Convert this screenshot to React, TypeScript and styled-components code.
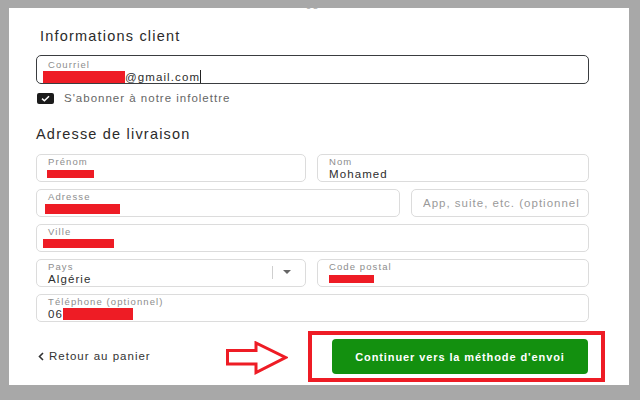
import React from "react";
import styled, { createGlobalStyle } from "styled-components";

const Global = createGlobalStyle`
  html, body { margin: 0; padding: 0; background: #a8a8a8; }
  body { font-family: "Liberation Sans", Arial, sans-serif; color: #333; }
  * { box-sizing: border-box; }
`;

const Frame = styled.div`
  width: 640px;
  height: 400px;
  padding: 8px 11px 15px 9px;
`;

const Panel = styled.main`
  height: 100%;
  background: #fff;
  overflow: hidden;
  padding: 0 40px 0 27px;
  display: flex;
  flex-direction: column;
`;

const StepNumber = styled.div`
  align-self: center;
  font-size: 11px;
  line-height: 12px;
  color: #b0b0b0;
  letter-spacing: 1px;
  margin-top: -9px;
`;

const SectionTitle = styled.h2<{ $mt: number; $indent?: number }>`
  margin: ${(p) => p.$mt}px 0 0 ${(p) => p.$indent ?? 0}px;
  font-size: 14.5px;
  line-height: 18px;
  font-weight: 400;
  letter-spacing: 1.2px;
  color: #2b2b2b;
`;

const Row = styled.div<{ $cols: string; $mt: number }>`
  display: grid;
  grid-template-columns: ${(p) => p.$cols};
  column-gap: 11px;
  margin-top: ${(p) => p.$mt}px;
`;

const FieldBox = styled.div<{ $focused?: boolean; $center?: boolean }>`
  height: ${(p) => (p.$focused ? 29 : 28)}px;
  border: ${(p) => (p.$focused ? "1.5px solid #3a3d40" : "1px solid #dcdcdc")};
  border-radius: 5px;
  padding: ${(p) => (p.$focused ? "3px 12px 0 11px" : p.$center ? "0 8px 0 11px" : "1px 12px 0 11px")};
  display: flex;
  flex-direction: ${(p) => (p.$center ? "row" : "column")};
  align-items: ${(p) => (p.$center ? "center" : "stretch")};
  overflow: hidden;
  background: #fff;
`;

const FieldLabel = styled.span`
  font-size: 9.5px;
  line-height: 11px;
  letter-spacing: 1.1px;
  color: #8d8d8d;
  white-space: nowrap;
`;

const FieldValue = styled.span`
  display: flex;
  align-items: center;
  height: 13px;
  font-size: 11.5px;
  letter-spacing: 1.1px;
  color: #2e2e2e;
  white-space: nowrap;
`;

const Placeholder = styled.span`
  flex: 1;
  min-width: 0;
  overflow: hidden;
  font-size: 11.5px;
  letter-spacing: 1px;
  color: #9a9a9a;
  white-space: nowrap;
`;

const Redact = styled.span<{ $w: number; $h: number; $dx?: number }>`
  display: inline-block;
  width: ${(p) => p.$w}px;
  height: ${(p) => p.$h}px;
  margin-left: ${(p) => p.$dx ?? 0}px;
  background: #ee1c25;
  flex: none;
`;

const TextCaret = styled.span`
  display: inline-block;
  width: 1px;
  height: 13px;
  background: #222;
`;

const SelectRow = styled.div`
  display: flex;
  align-items: center;
  justify-content: space-between;
`;

const SelectText = styled.div`
  display: flex;
  flex-direction: column;
`;

const SelectAddon = styled.div`
  display: flex;
  align-items: center;
  gap: 10px;
  margin-top: -2px;
  margin-right: 2px;
`;

const Separator = styled.span`
  width: 1px;
  height: 13px;
  background: #cfcfcf;
`;

const Caret = styled.span`
  width: 0;
  height: 0;
  border-left: 4px solid transparent;
  border-right: 4px solid transparent;
  border-top: 4px solid #666;
`;

const CheckRow = styled.label`
  display: flex;
  align-items: center;
  gap: 10px;
  margin: 7px 0 0 1px;
  height: 14px;
`;

const CheckBox = styled.span`
  width: 17px;
  height: 11px;
  border-radius: 2px;
  background: #1b1b1b;
  display: flex;
  align-items: center;
  justify-content: center;
`;

const CheckText = styled.span`
  font-size: 11.5px;
  letter-spacing: 1px;
  color: #666;
`;

const Footer = styled.footer`
  display: flex;
  align-items: center;
  justify-content: space-between;
  margin: 9px -16px 0 0;
`;

const BackLink = styled.a`
  display: flex;
  align-items: center;
  gap: 5px;
  padding-left: 2px;
  margin-top: -1px;
  font-size: 11.5px;
  letter-spacing: 1px;
  color: #333;
  text-decoration: none;
`;

const CtaGroup = styled.div`
  display: flex;
  align-items: center;
  gap: 20px;
`;

const ArrowMark = styled.svg`
  display: block;
  margin-top: 3px;
`;

const Highlight = styled.div`
  width: 297px;
  height: 51px;
  border: 4px solid #ee1c25;
  padding: 4px 13px 4px 20px;
`;

const PrimaryButton = styled.button`
  width: 100%;
  height: 100%;
  border: none;
  border-radius: 4px;
  background: #13900f;
  color: #fff;
  font-family: "Liberation Sans", Arial, sans-serif;
  font-weight: 700;
  font-size: 11px;
  letter-spacing: 0.9px;
  cursor: pointer;
`;

export default function App() {
  return (
    <Frame>
      <Global />
      <Panel>
        <StepNumber>08</StepNumber>
        <SectionTitle $mt={16} $indent={4}>Informations client</SectionTitle>

        <Row $cols="1fr" $mt={10}>
          <FieldBox $focused>
            <FieldLabel>Courriel</FieldLabel>
            <FieldValue>
              <Redact $w={82} $h={12} $dx={-5} />
              @gmail.com
              <TextCaret />
            </FieldValue>
          </FieldBox>
        </Row>

        <CheckRow>
          <CheckBox>
            <svg width="9" height="7" viewBox="0 0 9 7">
              <path d="M1 3.6 L3.4 5.8 L8 1.2" fill="none" stroke="#fff" strokeWidth="1.5" />
            </svg>
          </CheckBox>
          <CheckText>S'abonner à notre infolettre</CheckText>
        </CheckRow>

        <SectionTitle $mt={20}>Adresse de livraison</SectionTitle>

        <Row $cols="270px 1fr" $mt={11}>
          <FieldBox>
            <FieldLabel>Prénom</FieldLabel>
            <FieldValue>
              <Redact $w={47} $h={8} $dx={-1} />
            </FieldValue>
          </FieldBox>
          <FieldBox>
            <FieldLabel>Nom</FieldLabel>
            <FieldValue>Mohamed</FieldValue>
          </FieldBox>
        </Row>

        <Row $cols="364px 1fr" $mt={7}>
          <FieldBox>
            <FieldLabel>Adresse</FieldLabel>
            <FieldValue>
              <Redact $w={75} $h={10} $dx={-3} />
            </FieldValue>
          </FieldBox>
          <FieldBox $center>
            <Placeholder>App, suite, etc. (optionnel)</Placeholder>
          </FieldBox>
        </Row>

        <Row $cols="1fr" $mt={7}>
          <FieldBox>
            <FieldLabel>Ville</FieldLabel>
            <FieldValue>
              <Redact $w={71} $h={9} $dx={-5} />
            </FieldValue>
          </FieldBox>
        </Row>

        <Row $cols="270px 1fr" $mt={7}>
          <FieldBox>
            <SelectRow>
              <SelectText>
                <FieldLabel>Pays</FieldLabel>
                <FieldValue>Algérie</FieldValue>
              </SelectText>
              <SelectAddon>
                <Separator />
                <Caret />
              </SelectAddon>
            </SelectRow>
          </FieldBox>
          <FieldBox>
            <FieldLabel>Code postal</FieldLabel>
            <FieldValue>
              <Redact $w={45} $h={8} />
            </FieldValue>
          </FieldBox>
        </Row>

        <Row $cols="1fr" $mt={7}>
          <FieldBox>
            <FieldLabel>Téléphone (optionnel)</FieldLabel>
            <FieldValue>
              06
              <Redact $w={70} $h={12} $dx={0} />
            </FieldValue>
          </FieldBox>
        </Row>

        <Footer>
          <BackLink href="#">
            <svg width="6" height="9" viewBox="0 0 6 9">
              <path d="M5 1 L1.5 4.5 L5 8" fill="none" stroke="#333" strokeWidth="1.6" />
            </svg>
            Retour au panier
          </BackLink>
          <CtaGroup>
            <ArrowMark width="62" height="34" viewBox="0 0 62 34">
              <path
                d="M1.5 9.5 H30 V2 L59.5 16.5 L30 31.5 V23 H1.5 Z"
                fill="#fff"
                stroke="#ee1c25"
                strokeWidth="3"
                strokeLinejoin="miter"
              />
            </ArrowMark>
            <Highlight>
              <PrimaryButton>Continuer vers la méthode d'envoi</PrimaryButton>
            </Highlight>
          </CtaGroup>
        </Footer>
      </Panel>
    </Frame>
  );
}
